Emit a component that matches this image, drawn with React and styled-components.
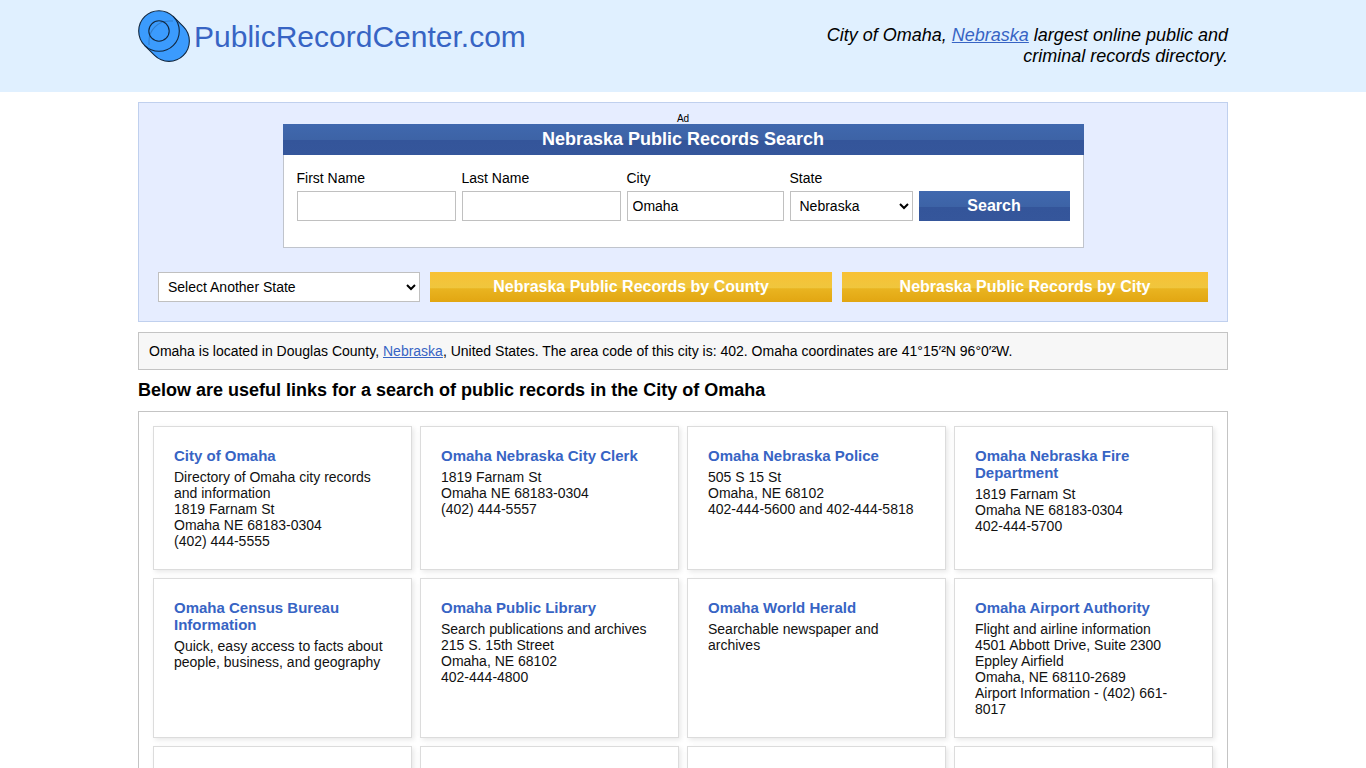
import React, { useState } from 'react';
import styled, { createGlobalStyle } from 'styled-components';

const resources = [
  {
    title: 'City of Omaha',
    lines: ['Directory of Omaha city records and information', '1819 Farnam St', 'Omaha NE 68183-0304', '(402) 444-5555'],
  },
  {
    title: 'Omaha Nebraska City Clerk',
    lines: ['1819 Farnam St', 'Omaha NE 68183-0304', '(402) 444-5557'],
  },
  {
    title: 'Omaha Nebraska Police',
    lines: ['505 S 15 St', 'Omaha, NE 68102', '402-444-5600 and 402-444-5818'],
  },
  {
    title: 'Omaha Nebraska Fire Department',
    lines: ['1819 Farnam St', 'Omaha NE 68183-0304', '402-444-5700'],
  },
  {
    title: 'Omaha Census Bureau Information',
    lines: ['Quick, easy access to facts about people, business, and geography'],
  },
  {
    title: 'Omaha Public Library',
    lines: ['Search publications and archives', '215 S. 15th Street', 'Omaha, NE 68102', '402-444-4800'],
  },
  {
    title: 'Omaha World Herald',
    lines: ['Searchable newspaper and archives'],
  },
  {
    title: 'Omaha Airport Authority',
    lines: [
      'Flight and airline information',
      '4501 Abbott Drive, Suite 2300',
      'Eppley Airfield',
      'Omaha, NE 68110-2689',
      'Airport Information - (402) 661-8017',
    ],
  },
  { lines: [] },
  { lines: [] },
  { lines: [] },
  { lines: [] },
];

const Logo = () => (
  <LogoLink href="#home">
    <svg width="52" height="52" viewBox="0 0 52 52" fill="#3b9bfd" stroke="#12273f" strokeWidth="1.1" aria-hidden="true">
      <path d="M35.4 6.6 L45.4 16.6 A20.3 20.3 0 0 1 16.6 45.4 L6.6 35.4 Z" />
      <circle cx="21" cy="21" r="20.3" />
      <path d="M11 35 V31 A20.3 20.3 0 0 1 31 11 H35" fill="none" strokeOpacity="0.25" />
      <circle cx="21" cy="21" r="10.2" fill="none" />
    </svg>
    PublicRecordCenter.com
  </LogoLink>
);

const App = () => {
  const [form, setForm] = useState({ first: '', last: '', city: 'Omaha', state: 'Nebraska' });

  const handleChange = (e) => {
    setForm({ ...form, [e.target.name]: e.target.value });
  };

  return (
    <>
      <GlobalStyle />
      <Header>
        <HeaderInner>
          <Logo />
          <Tagline>
            City of Omaha, <Link href="#nebraska">Nebraska</Link> largest online public and criminal records directory.
          </Tagline>
        </HeaderInner>
      </Header>
      <Container>
        <SearchPanel>
          <AdLabel>Ad</AdLabel>
          <SearchBox onSubmit={(e) => e.preventDefault()}>
            <SearchTitle>Nebraska Public Records Search</SearchTitle>
            <SearchFields>
              <Field>
                <label htmlFor="first">First Name</label>
                <TextInput id="first" name="first" value={form.first} onChange={handleChange} />
              </Field>
              <Field>
                <label htmlFor="last">Last Name</label>
                <TextInput id="last" name="last" value={form.last} onChange={handleChange} />
              </Field>
              <Field>
                <label htmlFor="city">City</label>
                <TextInput id="city" name="city" value={form.city} onChange={handleChange} />
              </Field>
              <Field>
                <label htmlFor="state">State</label>
                <Select id="state" name="state" value={form.state} onChange={handleChange}>
                  <option>Nebraska</option>
                </Select>
              </Field>
              <SearchButton type="submit">Search</SearchButton>
            </SearchFields>
          </SearchBox>
          <BrowseRow>
            <Select aria-label="Select Another State">
              <option>Select Another State</option>
            </Select>
            <BrowseLink href="#county">Nebraska Public Records by County</BrowseLink>
            <BrowseLink href="#city">Nebraska Public Records by City</BrowseLink>
          </BrowseRow>
        </SearchPanel>
        <Info>
          Omaha is located in Douglas County, <Link href="#nebraska">Nebraska</Link>, United States. The area code of
          this city is: 402. Omaha coordinates are 41°15′²N 96°0′²W.
        </Info>
        <SectionTitle>Below are useful links for a search of public records in the City of Omaha</SectionTitle>
        <CardGrid>
          {resources.map((item, i) => (
            <Card key={i}>
              {item.title && (
                <CardTitle>
                  <a href="#resource">{item.title}</a>
                </CardTitle>
              )}
              {item.lines.map((line) => (
                <CardLine key={line}>{line}</CardLine>
              ))}
            </Card>
          ))}
        </CardGrid>
      </Container>
    </>
  );
};

export default App;

const GlobalStyle = createGlobalStyle`
  * {
    box-sizing: border-box;
  }
  body {
    margin: 0;
    background: #fff;
    color: #000;
    font-family: "Liberation Sans", Arial, sans-serif;
    font-size: 14px;
    line-height: 16px;
  }
  input, select, button {
    font-family: inherit;
  }
`;

const Header = styled.header`
  background: #e0f0ff;
  padding: 10px 0 25px;
`;

const Container = styled.main`
  max-width: 1090px;
  margin: 10px auto;
`;

const HeaderInner = styled.div`
  max-width: 1090px;
  margin: 0 auto;
  display: flex;
  justify-content: space-between;
  align-items: flex-start;
`;

const LogoLink = styled.a`
  display: flex;
  align-items: flex-start;
  gap: 4px;
  color: #3764c4;
  font-size: 30px;
  line-height: 54px;
  text-decoration: none;
`;

const Link = styled.a`
  color: #3764c4;
  text-decoration: underline;
`;

const Tagline = styled.p`
  width: 436px;
  margin: 15px 0 0;
  font-size: 18px;
  line-height: 21px;
  font-style: italic;
  text-align: right;
`;

const SearchPanel = styled.section`
  background: #e6edff;
  border: 1px solid #c0d0ee;
  padding: 10px 19px 19px;
`;

const AdLabel = styled.div`
  font-size: 10px;
  line-height: 11px;
  text-align: center;
`;

const SearchBox = styled.form`
  max-width: 801px;
  margin: 0 auto 24px;
  background: #fff;
`;

const SearchTitle = styled.h2`
  margin: 0;
  background: linear-gradient(#4068ae, #3d63a6 52%, #34559a 53%, #35569b);
  color: #fff;
  font-size: 18px;
  line-height: 31px;
  text-align: center;
`;

const SearchFields = styled.div`
  display: grid;
  grid-template-columns: 159fr 159fr 157fr 123fr 151fr;
  gap: 6px;
  align-items: end;
  padding: 15px 13px 26px;
  border: 1px solid #c0c4cc;
  border-top: none;
`;

const Field = styled.div`
  display: flex;
  flex-direction: column;
  gap: 5px;
  min-width: 0;
`;

const TextInput = styled.input`
  width: 100%;
  height: 30px;
  padding: 0 5px;
  border: 1px solid #c0c0c0;
  background: #fff;
  color: #000;
  font-size: 14px;
`;

const Select = styled.select`
  width: 100%;
  height: 30px;
  padding: 0 0 0 5px;
  border: 1px solid #c0c0c0;
  border-radius: 0;
  background: #fff;
  color: #000;
  font-size: 14px;
`;

const SearchButton = styled.button`
  height: 30px;
  padding: 0;
  border: none;
  background: linear-gradient(#4068ae, #3d63a6 52%, #34559a 53%, #35569b);
  color: #fff;
  font-size: 16px;
  font-weight: bold;
  cursor: pointer;
`;

const BrowseRow = styled.div`
  display: grid;
  grid-template-columns: 262fr 402fr 366fr;
  gap: 10px;
`;

const BrowseLink = styled.a`
  background: linear-gradient(#f8c135, #f0c63d 52%, #e9b420 56%, #e2a612);
  color: #fff;
  font-size: 16px;
  line-height: 30px;
  font-weight: bold;
  text-align: center;
  text-decoration: none;
`;

const Info = styled.p`
  margin: 10px 0;
  padding: 10px;
  background: #f7f7f7;
  border: 1px solid #c4c4c4;
`;

const SectionTitle = styled.h1`
  margin: 0 0 11px;
  font-size: 18px;
  line-height: 20px;
`;

const CardGrid = styled.section`
  display: grid;
  grid-template-columns: repeat(4, 1fr);
  gap: 8px;
  padding: 14px;
  border: 1px solid #c4c4c4;
`;

const Card = styled.article`
  min-height: 144px;
  padding: 20px;
  border: 1px solid #dcdcdc;
  background: #fff;
  box-shadow: 2px 2px 5px #e8e8e8;
`;

const CardTitle = styled.h3`
  margin: 0 0 5px;
  font-size: 15px;
  line-height: 17px;

  a {
    color: #3764c4;
    text-decoration: none;
  }
`;

const CardLine = styled.div`
  color: #111;
`;
